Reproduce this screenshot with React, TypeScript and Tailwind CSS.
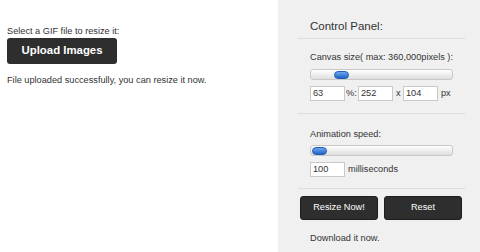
const font = { fontFamily: '"Liberation Sans", Arial, sans-serif' };

function Slider({ pos }: { pos: number }) {
  return (
    <div className="relative h-[11px] w-[143px] rounded-[3px] border border-[#c8c8c8] bg-gradient-to-b from-[#ffffff] to-[#dedede]">
      <div
        className="absolute top-[1px] h-[8px] w-[15px] rounded-full border border-[#1d5fb8] bg-gradient-to-b from-[#6fa6ee] to-[#1f62c6]"
        style={{ left: pos }}
      />
    </div>
  );
}

function Field({ value, w = 35 }: { value: string; w?: number }) {
  return (
    <div
      className="flex h-[15px] items-center border border-[#c9c9c9] bg-white pl-[2px] text-[9.2px] text-[#333]"
      style={{ width: w }}
    >
      {value}
    </div>
  );
}

export default function App() {
  return (
    <div className="flex h-[252px] w-[480px] bg-white text-[#333]" style={font}>
      <div className="w-[278px] pl-[7px] pt-[26px]">
        <div className="text-[9.2px] leading-[11px]">Select a GIF file to resize it:</div>
        <button className="mt-[1px] flex h-[26px] w-[110px] items-center justify-center rounded-[3px] bg-[#2e2e2e] text-[11.4px] font-bold text-white">
          Upload Images
        </button>
        <div className="mt-[11px] text-[9.2px] leading-[11px]">
          File uploaded successfully, you can resize it now.
        </div>
      </div>
      <div className="w-[202px] bg-[#f0f0f0] pl-[20px] pr-[15px]">
        <div className="border-b border-[#dcdcdc] pl-[12px] pt-[19px] pb-[5px] text-[11.5px] leading-[14px]">
          Control Panel:
        </div>
        <div className="border-b border-[#dcdcdc] pl-[12px] pt-[13px] pb-[12px]">
          <div className="text-[9.2px] leading-[11px]">Canvas size( max: 360,000pixels ):</div>
          <div className="mt-[6px]">
            <Slider pos={23} />
          </div>
          <div className="mt-[6px] flex items-center text-[9.2px]">
            <Field value="63" />
            <span className="ml-[1px] w-[12px]">%:</span>
            <Field value="252" />
            <span className="ml-[3px] w-[7px]">x</span>
            <Field value="104" />
            <span className="ml-[3px]">px</span>
          </div>
        </div>
        <div className="border-b border-[#dcdcdc] pl-[12px] pt-[15px] pb-[11px]">
          <div className="text-[9.2px] leading-[11px]">Animation speed:</div>
          <div className="mt-[5px]">
            <Slider pos={1} />
          </div>
          <div className="mt-[6px] flex items-center text-[9.2px]">
            <Field value="100" />
            <span className="ml-[3px]">milliseconds</span>
          </div>
        </div>
        <div className="mt-[7px] flex gap-[6px] pl-[2px]">
          <button className="flex h-[24px] w-[78px] items-center justify-center rounded-[3px] border border-[#1e1e1e] bg-[#2e2e2e] text-[9.2px] text-white">
            Resize Now!
          </button>
          <button className="flex h-[24px] w-[78px] items-center justify-center rounded-[3px] border border-[#1e1e1e] bg-[#2e2e2e] text-[9.2px] text-white">
            Reset
          </button>
        </div>
        <div className="mt-[13px] pl-[12px] text-[9.2px] leading-[11px]">Download it now.</div>
      </div>
    </div>
  );
}
